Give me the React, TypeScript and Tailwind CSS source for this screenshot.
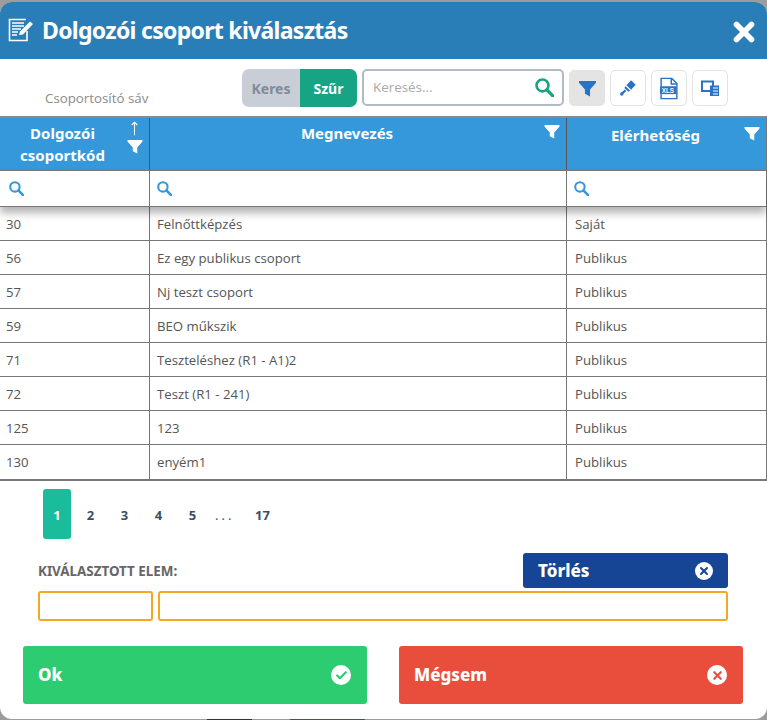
import { X, Check, MoveUp } from "lucide-react";

const rows = [
  { code: "30", name: "Felnőttképzés", access: "Saját" },
  { code: "56", name: "Ez egy publikus csoport", access: "Publikus" },
  { code: "57", name: "Nj teszt csoport", access: "Publikus" },
  { code: "59", name: "BEO műkszik", access: "Publikus" },
  { code: "71", name: "Teszteléshez (R1 - A1)2", access: "Publikus" },
  { code: "72", name: "Teszt (R1 - 241)", access: "Publikus" },
  { code: "125", name: "123", access: "Publikus" },
  { code: "130", name: "enyém1", access: "Publikus" },
];

const titleFont = "font-['Noto_Sans',sans-serif]";

const FunnelIcon = ({ className }: { className: string }) => (
  <svg viewBox="0 0 16 16" className={className} fill="currentColor">
    <path d="M0 1h16v1.6L10.4 9v6.5L5.6 13V9L0 2.6z" />
  </svg>
);

const SearchIcon = ({ className }: { className: string }) => (
  <svg viewBox="0 0 16 16" className={className} fill="none" stroke="currentColor">
    <circle cx="6.3" cy="6.3" r="5" strokeWidth="2.2" />
    <path d="M10 10l5 5" strokeWidth="2.8" strokeLinecap="round" />
  </svg>
);

const CircleIcon = ({ color, check }: { color: string; check?: boolean }) => (
  <span className="flex h-5 w-5 items-center justify-center rounded-full bg-white">
    {check ? (
      <Check size={13} strokeWidth={4} className={color} />
    ) : (
      <X size={13} strokeWidth={4} className={color} />
    )}
  </span>
);

const ToolButton = ({ children, active }: { children: React.ReactNode; active?: boolean }) => (
  <div
    className={`flex h-[36px] w-[36px] items-center justify-center rounded-[5px] border border-[#e1e3e5] ${
      active ? "bg-[#e4e4e4]" : "bg-white"
    }`}
  >
    {children}
  </div>
);

export default function App() {
  return (
    <div className="h-[720px] w-[767px] overflow-hidden bg-[#9c9c9c] pt-[2px] font-['Open_Sans',sans-serif]">
      <div className="h-[717px] overflow-hidden rounded-[12px] bg-white">
        {/* header */}
        <div className="flex h-[57px] items-center justify-between bg-[#2a7eb8] pl-[8px] pr-[8px] text-white">
          <div className="flex items-center gap-[8px]">
            <svg viewBox="0 0 26 24" className="mb-[2px] h-[24px] w-[26px]" fill="none" stroke="currentColor">
              <path d="M19 13v9.5H1.5v-21H18" strokeWidth="1.6" />
              <path d="M4 5h12M4 8h12M4 11h9M4 14h6M4 17h5" strokeWidth="1.4" />
              <path d="M11 17l1-3.5L22 3.5l3 2.5-10 10.5z" fill="currentColor" stroke="none" />
            </svg>
            <span className={`${titleFont} text-[23px] font-bold tracking-[-0.7px]`}>
              Dolgozói csoport kiválasztás
            </span>
          </div>
          <X size={30} strokeWidth={4.5} className="mt-[3px]" />
        </div>

        {/* toolbar */}
        <div className="flex h-[57px] items-start pr-[39px]">
          <div className="mt-[30px] w-[242px] pl-[45px] text-[13.3px] text-[#8b8b8b]">Csoportosító sáv</div>
          <div className={`${titleFont} mt-[10px] flex h-[38px] w-[115px] overflow-hidden rounded-[7px] text-[14px] font-bold`}>
            <div className="flex w-[58px] items-center justify-center bg-[#c9ced6] text-[#7f8a9a]">Keres</div>
            <div className="flex flex-1 items-center justify-center bg-[#17a485] text-white">Szűr</div>
          </div>
          <div className="ml-[5px] mt-[10px] flex h-[37px] w-[202px] items-center justify-between rounded-[5px] border-2 border-[#b1bac6] pl-[9px] pr-[8px] text-[13.4px] text-[#a9a9a9]">
            <span>Keresés...</span>
            <SearchIcon className="h-[19px] w-[19px] text-[#17a485]" />
          </div>
          <div className="ml-[5px] mt-[11px] flex gap-[5px] text-[#2a72c3]">
            <ToolButton active>
              <FunnelIcon className="h-[17px] w-[17px]" />
            </ToolButton>
            <ToolButton>
              <svg viewBox="0 0 16 16" className="h-[16px] w-[16px]" fill="currentColor">
                <path d="M6.5 5.2L11 0.3l4.7 4.5-4.6 4.9z" />
                <path d="M5.6 6.2l4.4 4.3-1.6 1.2-4-3.8z" />
                <path d="M4.8 9.4l1.6 1.5L2.6 14.6l-1.5-1.5z" />
                <circle cx="1.8" cy="14" r="1.7" />
              </svg>
            </ToolButton>
            <ToolButton>
              <svg viewBox="0 0 16 20" className="h-[23px] w-[18px]" fill="none" stroke="currentColor" strokeWidth="1.3">
                <path d="M1 8V1h9.5L15 5.5V19H1v-4" />
                <path d="M10 1v5h5" />
                <rect x="0" y="8" width="14.5" height="7" fill="currentColor" stroke="none" />
                <text x="1.6" y="13.8" fontSize="5.6" fontWeight="700" fill="#fff" stroke="none" fontFamily="Liberation Sans, sans-serif">XLS</text>
              </svg>
            </ToolButton>
            <ToolButton>
              <svg viewBox="0 0 18 16" className="h-[16px] w-[18px]" fill="none" stroke="currentColor">
                <path d="M1 1.5h11v9.5H1z" strokeWidth="2" />
                <path d="M9 5.5h9V16H9z" fill="currentColor" stroke="none" />
                <path d="M12 8h5M12 11h5M12 14h5" stroke="#fff" strokeWidth="1" />
              </svg>
            </ToolButton>
          </div>
        </div>

        {/* table */}
        <div className="border-t-2 border-t-[#8a8a8a] border-r border-r-[#777] border-b-2 border-b-[#777] text-[13.2px] text-[#555]">
          <div className={`${titleFont} grid h-[53px] grid-cols-[150px_417px_1fr] border-b border-[#777] bg-[#3498db] text-[15px] font-bold text-white`}>
            <div className="relative flex flex-col items-center justify-center border-r border-[#555] pr-[24px] leading-[22px]">
              <span>Dolgozói</span>
              <span>csoportkód</span>
              <MoveUp size={15} strokeWidth={1.7} className="absolute right-[7px] top-[3px]" />
              <FunnelIcon className="absolute right-[6px] top-[21px] h-[15px] w-[16px]" />
            </div>
            <div className="relative border-r border-[#555] pr-[22px] pt-[4px] text-center">
              Megnevezés
              <FunnelIcon className="absolute right-[6px] top-[6px] h-[15px] w-[16px]" />
            </div>
            <div className="relative pr-[22px] pt-[6px] text-center">
              Elérhetőség
              <FunnelIcon className="absolute right-[6px] top-[8px] h-[15px] w-[16px]" />
            </div>
          </div>
          <div className="relative grid h-[36px] grid-cols-[150px_417px_1fr] border-b border-[#777] shadow-[0_6px_8px_rgba(0,0,0,0.3)]">
            <div className="flex items-center border-r border-[#777] pl-[9px]">
              <SearchIcon className="h-[15px] w-[15px] text-[#3498db]" />
            </div>
            <div className="flex items-center border-r border-[#777] pl-[7px]">
              <SearchIcon className="h-[15px] w-[15px] text-[#3498db]" />
            </div>
            <div className="flex items-center pl-[7px]">
              <SearchIcon className="h-[15px] w-[15px] text-[#3498db]" />
            </div>
          </div>
          {rows.map((row, i) => (
            <div
              key={row.code}
              className={`grid h-[34px] grid-cols-[150px_417px_1fr] ${i < rows.length - 1 ? "border-b border-[#777]" : ""}`}
            >
              <div className="flex items-center border-r border-[#777] pl-[6px] pt-[2px]">{row.code}</div>
              <div className="flex items-center border-r border-[#777] pl-[7px] pt-[2px]">{row.name}</div>
              <div className="flex items-center pl-[8px] pt-[2px]">{row.access}</div>
            </div>
          ))}
        </div>

        {/* pagination */}
        <div className={`${titleFont} mt-[8px] flex h-[50px] items-center pl-[43px] text-[13px] font-bold text-[#3c4f66]`}>
          <div className="flex h-[50px] w-[28px] items-center justify-center rounded-[3px] bg-[#1abc9c] pt-[4px] text-white">1</div>
          <div className="flex w-[34px] justify-center pl-[5px] pt-[4px]">2</div>
          <div className="flex w-[34px] justify-center pl-[5px] pt-[4px]">3</div>
          <div className="flex w-[34px] justify-center pl-[5px] pt-[4px]">4</div>
          <div className="flex w-[34px] justify-center pl-[5px] pt-[4px]">5</div>
          <div className="w-[29px] pl-[8px] pt-[4px] font-normal tracking-[3px]">...</div>
          <div className="pl-[19px] pt-[4px]">17</div>
        </div>

        {/* selected item */}
        <div className="mt-[14px] flex items-center justify-between pl-[38px] pr-[39px]">
          <span className={`${titleFont} mt-[2px] text-[13.4px] font-bold text-[#666]`}>KIVÁLASZTOTT ELEM:</span>
          <div className={`${titleFont} flex h-[35px] w-[205px] items-center justify-between rounded-[3px] bg-[#154594] pl-[15px] pr-[15px] text-[17px] font-extrabold text-white`}>
            <span>Törlés</span>
            <span className="flex h-[18px] w-[18px] items-center justify-center rounded-full bg-white">
              <X size={12} strokeWidth={4} className="text-[#154594]" />
            </span>
          </div>
        </div>
        <div className="mt-[3px] flex gap-[5px] pl-[38px] pr-[39px]">
          <div className="h-[30px] w-[115px] rounded-[3px] border-2 border-[#f5a623]" />
          <div className="h-[30px] flex-1 rounded-[3px] border-2 border-[#f5a623]" />
        </div>

        {/* actions */}
        <div className={`${titleFont} mt-[25px] flex justify-between pl-[23px] pr-[24px] text-[17px] font-extrabold text-white`}>
          <div className="flex h-[58px] w-[344px] items-center justify-between rounded-[3px] bg-[#2ecc71] pl-[15px] pr-[16px]">
            <span>Ok</span>
            <CircleIcon color="text-[#2ecc71]" check />
          </div>
          <div className="flex h-[58px] w-[344px] items-center justify-between rounded-[3px] bg-[#e94e3d] pl-[15px] pr-[16px]">
            <span>Mégsem</span>
            <CircleIcon color="text-[#e94e3d]" />
          </div>
        </div>
      </div>
      {/* page text behind the modal, only its top edge shows */}
      <div className="flex h-[1px] pl-[207px]">
        <div className="w-[45px] bg-[#333]" />
        <div className="ml-[38px] w-[75px] bg-[#1f5f8a]" />
      </div>
    </div>
  );
}
